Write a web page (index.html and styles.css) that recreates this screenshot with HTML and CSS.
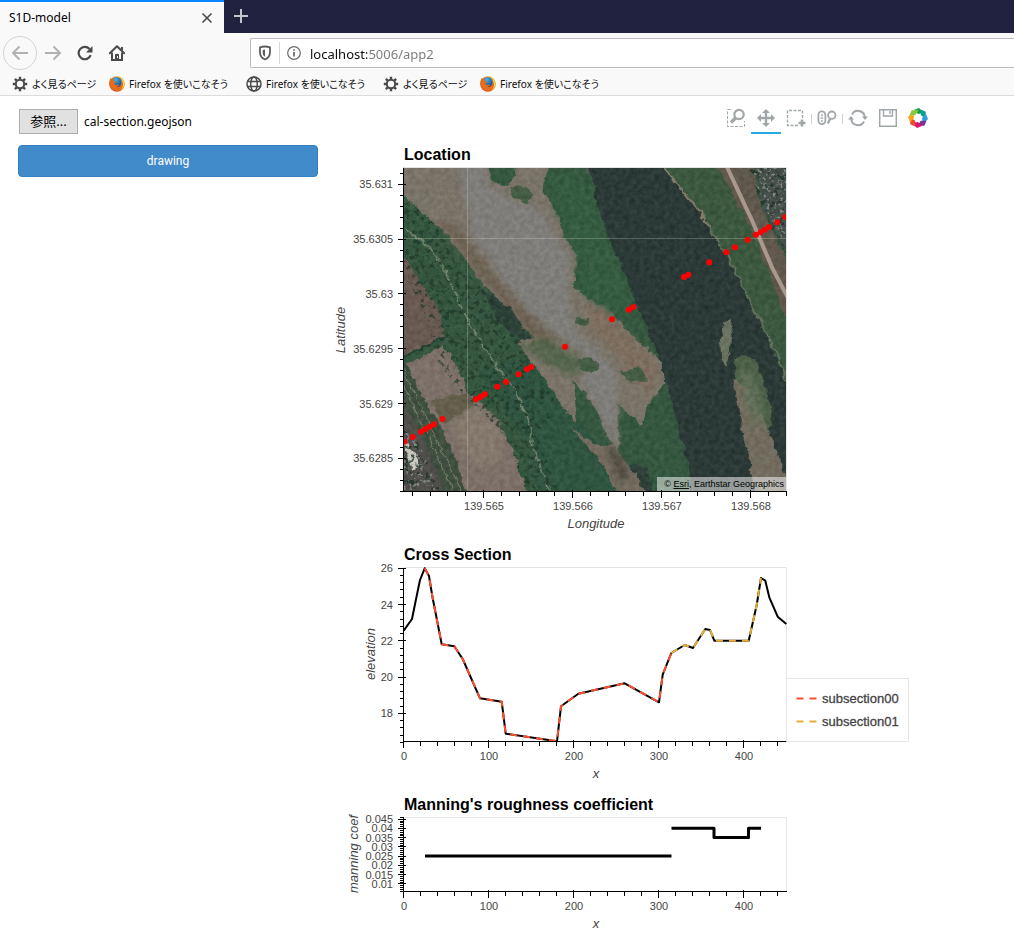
FILE: index.html
```html
<!DOCTYPE html>
<html lang="ja">
<head>
<meta charset="utf-8">
<title>S1D-model</title>
<link rel="stylesheet" href="styles.css">
</head>
<body>
<svg class="defs" width="0" height="0" aria-hidden="true">
  <defs>
    <radialGradient id="fox" cx=".7" cy=".25" r=".85">
      <stop offset="0" stop-color="#ffcb2e"/><stop offset=".5" stop-color="#f48a1c"/><stop offset="1" stop-color="#cf3f1c"/>
    </radialGradient>
    <radialGradient id="globe" cx=".4" cy=".25" r=".8">
      <stop offset="0" stop-color="#3fb4e8"/><stop offset="1" stop-color="#1d3f86"/>
    </radialGradient>
    <symbol id="i-gear" viewBox="0 0 16 16">
      <g fill="none" stroke="#4a4a4b"><circle cx="8" cy="8" r="4.2" stroke-width="2"/>
      <path stroke-width="2.4" d="M8 .8v2.6M8 12.600v2.600M.8 8h2.600M12.600 8h2.600M2.900 2.900l1.800 1.800M11.300 11.300l1.800 1.800M2.900 13.100l1.800-1.800M11.300 4.700l1.800-1.800"/></g>
    </symbol>
    <symbol id="i-globe" viewBox="0 0 16 16">
      <g fill="none" stroke="#4a4a4b" stroke-width="1.500"><circle cx="8" cy="8" r="7"/><ellipse cx="8" cy="8" rx="3.300" ry="7"/><path d="M1.500 5.500h13M1.500 10.500h13"/></g>
    </symbol>
    <symbol id="i-fox" viewBox="0 0 16 16">
      <circle cx="8" cy="8" r="7.800" fill="url(#fox)"/>
      <circle cx="7.600" cy="6.200" r="5.200" fill="url(#globe)"/>
      <path fill="#e66b1a" d="M.3 6.500C.5 4 1.300 2.600 2 1.800c0 .8.300 1.300.7 1.600C3.800 3 5 3.200 5.600 3.600c-.5.600-1 1.200-.9 1.700.8.200 1.700.1 2.300.5-.2.900-1.300 1.100-1.600 1.900.2 1 1.400 1.300 2.400 1.200 1-.1 1.700-.5 2.500-.1.200.9-1.300 1.600-2.600 1.900 2 .6 4-.2 4.800-1.800.6-1.400.3-3-.5-4.300 1.200.6 2.200 2 2.300 3.600.6 4-2.500 6.600-6.200 6.800C4 15 .3 11.500.3 6.500z"/>
      <path fill="#ffd34d" d="M13 3.500c1.900 1.300 2.600 3.300 2.400 5.300-.3 2.600-1.900 4.500-3.900 5.600 1.900-2 2.700-4 2.500-6.300-.1-1.700-.5-3.200-1-4.600z"/>
    </symbol>
  </defs>
</svg>

<header class="browser">
  <div class="tabs">
    <div class="tab">
      <span class="tab-title">S1D-model</span>
      <button class="icon-button close" type="button" aria-label="Close tab"><svg width="12" height="12" viewBox="0 0 12 12"><path d="M1.500 1.500l9 9M10.500 1.500l-9 9" stroke="#4a4a4b" stroke-width="1.600"/></svg></button>
    </div>
    <button class="icon-button new-tab" type="button" aria-label="New tab"><svg width="14" height="14" viewBox="0 0 14 14"><path d="M7 0v14M0 7h14" stroke="#c4c4cc" stroke-width="2"/></svg></button>
  </div>
  <div class="nav">
    <button class="icon-button back" type="button" aria-label="Back"><svg width="18" height="16" viewBox="0 0 18 16"><path d="M17 8H2M8.500 1.500L2 8l6.500 6.500" fill="none" stroke="#b1b1b3" stroke-width="2"/></svg></button>
    <button class="icon-button" type="button" aria-label="Forward"><svg width="18" height="16" viewBox="0 0 18 16"><path d="M1 8h15M9.500 1.500L16 8l-6.500 6.500" fill="none" stroke="#b1b1b3" stroke-width="2"/></svg></button>
    <button class="icon-button" type="button" aria-label="Reload"><svg width="16" height="16" viewBox="0 0 16 16"><path d="M13.700 10.200a6.200 6.200 0 1 1-1.200-6.300" fill="none" stroke="#4a4a4b" stroke-width="2.200"/><path d="M15.500 1v6.500H9z" fill="#4a4a4b"/></svg></button>
    <button class="icon-button" type="button" aria-label="Home"><svg width="16" height="16" viewBox="0 0 16 16"><path d="M.8 8.200L8 1.200l7.200 7" fill="none" stroke="#4a4a4b" stroke-width="2" stroke-linecap="round" stroke-linejoin="round"/><path d="M3 7.500V15h10V7.500" fill="none" stroke="#4a4a4b" stroke-width="2"/><path fill="#4a4a4b" d="M6 15V9.500q2-1.500 4 0V15zM12 2h2v4l-2-2z"/><path fill="#f9f9fa" d="M8 11h1v2H8z"/></svg></button>
    <div class="url">
      <svg width="14" height="16" viewBox="0 0 14 16"><path d="M7 1.500c2 0 3.500.3 5 .8v5C12 11 10 13.300 7 14.500 4 13.300 2 11 2 7.300v-5c1.500-.5 3-.8 5-.8z" fill="none" stroke="#5c5c5e" stroke-width="1.800"/><path d="M7 4.500v7.300C5.500 11 4.700 9.700 4.700 7.500V5z" fill="#5c5c5e"/></svg>
      <span class="rule"></span>
      <svg width="14" height="14" viewBox="0 0 14 14"><circle cx="7" cy="7" r="6.300" fill="none" stroke="#6a6a6c" stroke-width="1.200"/><path d="M7 6v4.500M7 3.300v1.500" stroke="#5c5c5e" stroke-width="1.600"/></svg>
      <input class="address" type="text" aria-label="Address" value="localhost:5006/app2">
    </div>
  </div>
  <nav class="bookmarks">
    <a href="#"><svg width="16" height="16"><use href="#i-gear"/></svg><span class="short">よく見るページ</span></a>
    <a href="#"><svg width="16" height="16"><use href="#i-fox"/></svg><span>Firefox を使いこなそう</span></a>
    <a href="#"><svg width="16" height="16"><use href="#i-globe"/></svg><span>Firefox を使いこなそう</span></a>
    <a href="#"><svg width="16" height="16"><use href="#i-gear"/></svg><span class="short">よく見るページ</span></a>
    <a href="#"><svg width="16" height="16"><use href="#i-fox"/></svg><span>Firefox を使いこなそう</span></a>
  </nav>
</header>

<main class="app">
  <section class="controls">
    <div class="file"><button class="browse" type="button">参照...</button><span>cal-section.geojson</span></div>
    <button class="draw" type="button">drawing</button>
  </section>

  <section class="plots">
    <div class="toolbar">
      <button type="button" aria-label="Box zoom"><svg width="20" height="20" viewBox="0 0 20 20" fill="none" stroke="#a1a6a9"><path d="M1.500 1.500h17v17h-17z" stroke-dasharray="3 1.500"/><path d="M6 1h13v12H9z" fill="#fff" stroke="none"/><circle cx="13" cy="6.500" r="4.700" stroke-width="2.200"/><path d="M9.500 10L5 14.500" stroke-width="3.400"/></svg></button>
      <button class="active" type="button" aria-label="Pan"><svg width="20" height="20" viewBox="0 0 20 20"><path fill="#a1a6a9" d="M10 1l4 4h-2.800v3.800H15V6l4 4-4 4v-2.800h-3.800V15H14l-4 4-4-4h2.800v-3.800H5V14l-4-4 4-4v2.800h3.800V5H6z"/></svg></button>
      <button type="button" aria-label="Box select"><svg width="20" height="20" viewBox="0 0 20 20" fill="none" stroke="#a1a6a9"><path d="M12 17.500H1.500v-15h15V11" stroke-width="1.400" stroke-dasharray="3 1.500"/><path d="M16 11.500v7M12.500 15h7" stroke-width="2.600"/></svg></button>
      <i></i>
      <button type="button" aria-label="Wheel zoom"><svg width="20" height="20" viewBox="0 0 20 20" fill="none" stroke="#a1a6a9" stroke-width="1.800"><rect x="1.400" y="3.400" width="7" height="12.700" rx="3.500"/><path d="M4.900 6v2.500M4.900 12v2.200M3.500 10.200h2.800" stroke-width="1.300"/><circle cx="14.800" cy="7.200" r="3.700"/><path d="M13.300 10.500l-2.500 5" stroke-width="2.200"/></svg></button>
      <i></i>
      <button type="button" aria-label="Reset"><svg width="20" height="20" viewBox="0 0 20 20" fill="none" stroke="#a1a6a9" stroke-width="2"><path d="M4 6.500a6.800 6.800 0 0 1 12.800 2.500M16 13.500A6.800 6.800 0 0 1 3.200 11"/><path fill="#a1a6a9" stroke="none" d="M14 8.500h6L17 12zM0 11.500h6L3 8z"/></svg></button>
      <button type="button" aria-label="Save"><svg width="20" height="20" viewBox="0 0 20 20" fill="none" stroke="#a1a6a9" stroke-width="1.500"><path d="M1.700 1.700h16.600v16.600H1.700z"/><path d="M5.500 2v6h9V2M12 3v3" stroke-width="1.400"/></svg></button>
      <a href="#" aria-label="Bokeh"><svg width="20" height="20" viewBox="-10 -10 20 20">
        <path fill="#13a04a" d="M-4-8L1-10 6-5 0-4z"/><path fill="#0f9c9a" d="M-4-8L1-10 6-5 0-4z" transform="rotate(45)"/><path fill="#2c9fdb" d="M-4-8L1-10 6-5 0-4z" transform="rotate(90)"/><path fill="#793290" d="M-4-8L1-10 6-5 0-4z" transform="rotate(135)"/><path fill="#e3126e" d="M-4-8L1-10 6-5 0-4z" transform="rotate(180)"/><path fill="#ed4c2c" d="M-4-8L1-10 6-5 0-4z" transform="rotate(225)"/><path fill="#fba51a" d="M-4-8L1-10 6-5 0-4z" transform="rotate(270)"/><path fill="#8cc63f" d="M-4-8L1-10 6-5 0-4z" transform="rotate(315)"/>
      </svg></a>
    </div>

    <svg class="chart" viewBox="328 140 605 400" role="img" aria-label="Location">
      <defs>
        <clipPath id="frame"><path d="M403 167.500h383.500v324H403z"/></clipPath>
        <filter id="ground" x="390" y="155" width="410" height="350" filterUnits="userSpaceOnUse" color-interpolation-filters="sRGB">
          <feTurbulence type="fractalNoise" baseFrequency=".12" numOctaves="4" seed="4" result="n"/>
          <feDisplacementMap in="SourceGraphic" in2="n" scale="7" xChannelSelector="R" yChannelSelector="G"/>
          <feGaussianBlur stdDeviation=".6" result="d"/>
          <feTurbulence type="fractalNoise" baseFrequency=".2" numOctaves="4" seed="9"/>
          <feColorMatrix values="1 0 0 0 0 1 0 0 0 0 1 0 0 0 0 0 0 0 0 1" result="h"/>
          <feComposite in="d" in2="h" operator="arithmetic" k2="1" k3=".12" k4="-.06"/>
        </filter>
        <filter id="soft" x="-20%" y="-20%" width="140%" height="140%" color-interpolation-filters="sRGB"><feGaussianBlur stdDeviation="9"/></filter>
        <filter id="trees" x="390" y="155" width="410" height="350" filterUnits="userSpaceOnUse" color-interpolation-filters="sRGB">
          <feTurbulence type="fractalNoise" baseFrequency=".2" numOctaves="3" seed="21"/>
          <feColorMatrix values="0 0 0 0 .11 0 0 0 0 .2 0 0 0 0 .15 0 7 0 0 -3.900"/>
          <feComposite in2="SourceGraphic" operator="in"/>
        </filter>
        <filter id="roofs" x="390" y="155" width="410" height="350" filterUnits="userSpaceOnUse" color-interpolation-filters="sRGB">
          <feTurbulence type="fractalNoise" baseFrequency=".3" numOctaves="2" seed="5"/>
          <feColorMatrix values="0 0 0 0 .62 0 0 0 0 .62 0 0 0 0 .62 0 7 0 0 -4"/>
          <feComposite in2="SourceGraphic" operator="in"/>
        </filter>
      </defs>
      <g clip-path="url(#frame)">
        <g filter="url(#ground)"><g transform="translate(400 164) scale(.3333)">
          <path fill="#35573f" d="M-40-40h1260v1080H-40z"/>
          <path fill="#2f5440" d="M230 620L400 590 480 700 640 900 700 1020H430L400 850z"/>
          <path fill="#7a7468" d="M-30-30H245L275 50 320 70 345 30 350-30H450L430 80 470 140 490 210 530 280 520 370 560 400 620 430 700 520 760 570 790 600 800 650 760 700 735 740 725 785 690 750 655 720 655 860 630 830 590 740 550 680 520 650 530 720 525 775 490 730 430 640 390 590 350 530 400 520 330 440 250 360 200 290 130 200-30 60z"/>
          <path fill="#7f7e7b" filter="url(#soft)" d="M180-20H235L260 60 330 100 420 140 460 210 515 290 505 400 530 510 600 560 650 630 655 700 650 860 600 740 540 650 580 600 500 530 430 480 350 400 280 310 220 220 190 100z"/>
          <path fill="#6d6152" filter="url(#soft)" d="M110 170L160 180 250 290 350 420 440 500 480 560 440 570 330 440 220 310z"/>
          <path fill="#7d6e5f" filter="url(#soft)" d="M560 420L620 440 700 530 780 610 760 700 690 640 640 560 570 500z"/>
          <path fill="#56654d" filter="url(#soft)" d="M355 545L440 520 520 570 560 600 520 640 440 600z"/>
          <path fill="#455c45" d="M330 75L370 65 400 95 385 120 340 100zM535 590L570 580 600 600 590 625 545 620zM530 460L570 465 560 490 525 480zM660 620L730 610 740 650 680 650z"/>
          <path fill="#355c40" filter="url(#soft)" d="M440 40L520 20 580 90 640 240 700 420 660 470 540 380 535 280 480 160z"/>
          <path fill="#56584a" d="M540-20H610L620 50 590 60z"/>
          <path fill="#716a5d" d="M515 790L600 850 640 840 680 900 740 950 750 1010H660L610 900 570 860z"/>
          <path fill="#4f4b40" filter="url(#soft)" d="M620 850L650 860 690 940 660 950z"/>
          <path fill="#2f3f3a" d="M690 900L740 910 760 990 740 1000z"/>
          <path fill="#2c4138" d="M240 370L330 430 390 520 370 530 300 480z"/>
          <path fill="#685a50" d="M-30 240L10 270 60 350 120 440 130 520-30 590z"/>
          <path fill="#7d7068" d="M20 600L130 545 190 640 200 690 250 720 300 780 340 860 390 1010H200L130 800 70 700z"/>
          <path fill="#635f4c" d="M90 710L200 690 230 720 130 780z"/>
          <path fill="#84796c" filter="url(#soft)" d="M150 780L240 720 300 790 300 900 220 900z"/>
          <path fill="#405040" d="M-20 600L20 610 90 740 160 860 210 1010H130L60 830-20 680z"/>
          <path fill="#504f4c" d="M-30 670L20 730 80 850 140 1010H-30z"/>
          <path fill="none" stroke="#777d66" stroke-width="3" d="M-10 620L170 1000M5 610L195 1000"/>
          <path fill="#c9c9c2" d="M12 835L25 838 65 905 40 920 12 860z"/>
          <path fill="none" stroke="#728068" stroke-width="5" d="M-10 175L80 240 130 310 170 400 210 480 250 550 300 620 350 680 380 760 400 850 430 930 455 1000"/>
          <path fill="none" stroke="#293f31" stroke-width="7" d="M0 585L80 545 140 515M10 580"/>
          <path fill="#2c3a37" d="M560-20H780L830 60 900 150 960 240 1010 340 1060 440 1110 540 1160 660 1200 740V1020H880L860 880 820 740 780 590 730 470 680 340 640 260 600 150 580 60z"/>
          <path fill="#3c5940" d="M790-20H950L1010 90 1060 190 1110 340 1150 440 1200 560V740L1150 620 1110 530 1050 410 1000 310 930 180 870 100 820 40z"/>
          <path fill="none" stroke="#7e7867" stroke-width="7" d="M785-10L830 60 880 120 930 190"/>
          <path fill="none" stroke="#68705f" stroke-width="5" d="M930 190L980 270 1040 390 1090 490 1130 570 1170 680"/>
          <path fill="#60584c" d="M930-20H1050L1080 110 1130 230 1200 350V560L1140 420 1080 250 1010 110z"/>
          <path fill="#46504a" d="M1050-20H1200V330L1150 250 1100 150z"/>
          <path fill="#69735f" d="M975 470L990 460 996 480 990 560 978 605 963 580 960 520z"/>
          <path fill="#4c6148" d="M1005 590L1030 570 1070 590 1100 680 1120 780 1090 830 1040 760 1010 700z"/>
          <path fill="#716c5d" d="M1002 650L1040 670 1090 760 1140 890 1165 960V1020H1075L1050 900 1020 760z"/>
          <path fill="#62705a" filter="url(#soft)" d="M1020 620L1060 630 1090 760 1070 790 1040 720z"/>
        </g>
        </g>
        <g transform="translate(3.500 3.500)"><path fill="none" stroke="#a8998c" stroke-width="4" d="M720 156l29 62 20 47 20 38"/></g>
        <path filter="url(#trees)" fill="#000" opacity=".65" d="M404 196l24 18 40 60 40 42 20 40 30 50-20 30 20 55h-30l-24-56-30-30-20-20-20-30-4-30-22-46-6-20z"/>
        <path filter="url(#trees)" fill="#000" opacity=".8" d="M748 168h40v90l-24-44zM404 430l14 10 22 50h-36z"/>
        <path filter="url(#roofs)" fill="#000" opacity=".7" d="M750 168h38v82l-20-36zM404 430l14 10 20 50h-34z"/>
        <path fill="none" stroke="#dfe5dc" stroke-opacity=".25" d="M467.500 168v323M403 238.500h384"/>
        <g id="stations" fill="#f00"></g>
      </g>
      <path fill="#fff" fill-opacity=".5" d="M657 477h129v14H657z"/>
      <text class="credit" x="784" y="487">© <a href="#"><tspan>Esri</tspan></a>, Earthstar Geographics</text>
      <text class="title" x="404" y="160">Location</text>
      <path class="frame" d="M403.500 167.500h383v324"/>
      <g id="axes-location"></g>
      <text class="name" x="596" y="528">Longitude</text>
      <text class="name" transform="translate(345 330) rotate(-90)">Latitude</text>
    </svg>

    <svg class="chart" viewBox="328 540 605 250" role="img" aria-label="Cross Section">
      <text class="title" x="404" y="560">Cross Section</text>
      <path class="frame" d="M403.500 567.500h383v174"/>
      <path class="profile" d="M403.700 630.700L412 619l4-19.700 4-19.300 4.700-11.700 4.300 7.700 3.700 22.300 9 46 12.600 2 8.400 12.700 17.300 39.300 21.700 3.400 4 32 51.300 7.600 4-35 17.300-12.600 46.400-10.400 34.300 19 3.700-27.600 8.600-21.700 13.400-8 8.300 3 12.300-19 4.700 1 4.300 10.700h34.400l8-35.700 4.300-27 4.300 2.700 4 16.600 8.400 19.400 8.600 7.300"/>
      <path class="profile sub0" d="M424.700 568.300l4.300 7.700 3.700 22.300 9 46 12.600 2 8.400 12.700 17.300 39.300 21.700 3.400 4 32 51.300 7.600 4-35 17.300-12.600 46.400-10.400 34.300 19 3.700-27.600 8.600-21.700"/>
      <path class="profile sub1" d="M671.300 653l13.400-8 8.300 3 12.300-19 4.700 1 4.300 10.700h34.400l8-35.700 4.300-27"/>
      <g id="axes-section"></g>
      <text class="name" x="596" y="778">x</text>
      <text class="name" transform="translate(375 654) rotate(-90)">elevation</text>
      <path class="frame" d="M786.500 678.500h122v63h-122z"/>
      <path class="profile sub0" d="M796.500 698.500h20"/>
      <path class="profile sub1" d="M796.500 721.500h20"/>
      <text class="legend" x="822" y="703">subsection00</text>
      <text class="legend" x="822" y="726">subsection01</text>
    </svg>

    <svg class="chart" viewBox="328 790 605 150" role="img" aria-label="Manning's roughness coefficient">
      <text class="title" x="404" y="810">Manning's roughness coefficient</text>
      <path class="frame" d="M403.500 817.500h383v74"/>
      <path class="step" d="M425 856h246.500M671.500 828.300h42.500v9.200h34.500v-9.200H761"/>
      <g id="axes-manning"></g>
      <text class="name" x="596" y="928">x</text>
      <text class="name" transform="translate(358 854) rotate(-90)">manning coef</text>
    </svg>
  </section>
</main>
<script src="charts.js"></script>
</body>
</html>
```
FILE: styles.css
```css
* { box-sizing: border-box; }
body { margin: 0; background: #fff; color: #000; font-family: "Noto Sans", "Noto Sans CJK JP", sans-serif; font-size: 12px; }
button { font: inherit; padding: 0; cursor: pointer; }
.defs { position: absolute; }
.browser { background: #f9f9fa; border-bottom: 1px solid #dcdcdc; }
.tabs { display: flex; align-items: stretch; height: 33px; background: #20223f; }
.tab { display: flex; align-items: center; justify-content: space-between; width: 224px; padding: 0 10px 0 9px; background: #f9f9fa; border-top: 2px solid #0a84ff; }
.tab-title { font-size: 12px; }
.icon-button { display: flex; align-items: center; justify-content: center; width: 32px; height: 32px; border: 0; background: none; }
.close { width: 14px; height: 14px; }
.new-tab { width: 34px; }
.nav { display: flex; align-items: center; height: 39px; padding-left: 3px; }
.back { width: 34px; height: 34px; border: 1px solid #d4d4d6; border-radius: 50%; }
.url { display: flex; flex: 1; align-items: center; height: 30px; margin-left: 117px; padding-left: 7px; background: #fff; border: 1px solid #bcbcbe; border-right: 0; border-radius: 2px 0 0 2px; }
.rule { width: 1px; height: 22px; margin: 0 7px; background: #d8d8da; }
.address { flex: 1; min-width: 0; height: 24px; margin-left: 9px; padding: 2px 0 0; border: 0; font-family: "Noto Sans", sans-serif; font-size: 13px; color: transparent; background: linear-gradient(to right, #0c0c0d 57px, #77777b 57px) text; -webkit-background-clip: text; }
.bookmarks { display: flex; gap: 12px; align-items: center; height: 23px; padding-left: 12px; }
.bookmarks a { display: flex; align-items: center; gap: 4px; color: #0c0c0d; font-size: 10px; text-decoration: none; white-space: nowrap; font-feature-settings: "palt"; }
.bookmarks span { width: 105px; }
.bookmarks .short { width: 65px; }
.app { display: flex; gap: 10px; align-items: flex-start; padding: 8px 18px 0; }
.controls { display: flex; flex: none; flex-direction: column; gap: 11px; width: 300px; padding-top: 5px; }
.file { display: flex; align-items: center; gap: 6px; padding-left: 1px; font-size: 12px; }
.browse { width: 59px; height: 25px; padding-bottom: 2px; color: #000; background: #e1e1e1; border: 1px solid #adadad; font-size: 13px; line-height: 20px; }
.draw { height: 32px; color: #fff; background: #428bca; border: 1px solid #357ebd; border-radius: 4px; font-family: Roboto, sans-serif; font-size: 12px; }
.plots { display: flex; flex: 0 1 605px; flex-direction: column; }
.toolbar { display: flex; align-items: flex-start; justify-content: flex-end; height: 36px; }
.toolbar button, .toolbar a { display: flex; align-items: center; justify-content: center; width: 30px; height: 30px; background: none; border: 0; border-bottom: 2px solid transparent; }
.toolbar .active { border-bottom-color: #26aae1; }
.toolbar i { width: 1px; height: 10px; margin-top: 10px; background: #d3d3d3; }
.chart { display: block; width: 100%; height: auto; font-family: "Liberation Sans", Arial, sans-serif; }
.title { font-size: 16px; font-weight: bold; }
.name { font-size: 13px; font-style: italic; fill: #444; text-anchor: middle; }
.tick { font-size: 11px; fill: #444; }
.tick-x { text-anchor: middle; }
.tick-y { text-anchor: end; }
.legend { font-size: 13px; fill: #444; stroke: #444; stroke-width: .3px; }
.credit { font-size: 9px; text-anchor: end; fill: #000; }
.credit tspan { fill: #000; text-decoration: underline; }
.frame { fill: none; stroke: #e5e5e5; }
.axis { fill: none; stroke: #000; shape-rendering: crispEdges; }
.profile { fill: none; stroke: #000; stroke-width: 2; stroke-linejoin: round; }
.sub0 { stroke: #fc4f30; stroke-dasharray: 7 6; }
.sub1 { stroke: #e5ae38; stroke-dasharray: 7 6; }
.step { fill: none; stroke: #000; stroke-width: 3; stroke-linejoin: round; }
```
FILE: charts.js
```js
const NS = 'http://www.w3.org/2000/svg';

function add(parent, tag, attrs, text) {
  const el = document.createElementNS(NS, tag);
  for (const key in attrs) el.setAttribute(key, attrs[key]);
  if (text !== undefined) el.textContent = text;
  parent.appendChild(el);
}

const snap = v => Math.floor(v) + 0.5;

// Axis lines, minor ticks every fifth of a step, major ticks and labels.
function axes(id, box, x, y) {
  const g = document.getElementById(id);
  const left = 403.5, right = 787, bottom = box.bottom;
  let d = `M${left} ${box.top}V${bottom}H${right}`;
  for (let k = -9; k < x.labels.length * 5 + 5; k++) {
    const p = x.start + k * x.step / 5;
    if (p > left - 1 && p < right) d += `M${snap(p)} ${bottom}v4`;
  }
  x.labels.forEach((label, i) => {
    const p = x.start + i * x.step;
    d += `M${snap(p)} ${bottom - 2}v8`;
    add(g, 'text', { class: 'tick tick-x', x: Math.round(p), y: bottom + 18.5 }, label);
  });
  for (let k = -5; k < y.labels.length * 5 + 5; k++) {
    const p = y.start + k * y.step / 5;
    if (p > box.top - 1 && p < bottom + 1) d += `M${left - 4} ${snap(p)}h4`;
  }
  y.labels.forEach((label, i) => {
    const p = y.start + i * y.step;
    d += `M${left - 6} ${snap(p)}h8`;
    add(g, 'text', { class: 'tick tick-y', x: 393, y: Math.round(p) + 4 }, label);
  });
  add(g, 'path', { class: 'axis', d });
}

axes('axes-location', { top: 168, bottom: 491.5 },
  { start: 483.5, step: 89, labels: ['139.565', '139.566', '139.567', '139.568'] },
  { start: 184.3, step: 54.8, labels: ['35.631', '35.6305', '35.63', '35.6295', '35.629', '35.6285'] });
const distance = { start: 403.7, step: 85, labels: ['0', '100', '200', '300', '400'] };
axes('axes-section', { top: 568, bottom: 741.5 }, distance,
  { start: 568.2, step: 36.3, labels: ['26', '24', '22', '20', '18'] });
axes('axes-manning', { top: 818, bottom: 891.5 }, distance,
  { start: 819.2, step: 9.25, labels: ['0.045', '0.04', '0.035', '0.03', '0.025', '0.02', '0.015', '0.01'] });

const stations = [[404.3, 441.7], [412.7, 437], [421, 431.7], [425.3, 429], [429.7, 426.7], [434, 424.3], [442.3, 419],
  [476, 399.3], [480.3, 397], [484.7, 394.3], [497.3, 386.7], [506, 382], [518.7, 374.3], [527, 369.3], [531.3, 367],
  [565, 346.7], [612, 319.3], [628.7, 309.7], [633.3, 307], [684, 277], [688.3, 274.7], [709.3, 262.3], [726.3, 252.3],
  [735, 247.3], [747.7, 239.7], [756, 234.7], [760.7, 232.3], [764.7, 229.7], [769, 227], [777.3, 222.3], [785.3, 217]];
for (const [cx, cy] of stations) add(document.getElementById('stations'), 'circle', { cx, cy, r: 3 });
```
